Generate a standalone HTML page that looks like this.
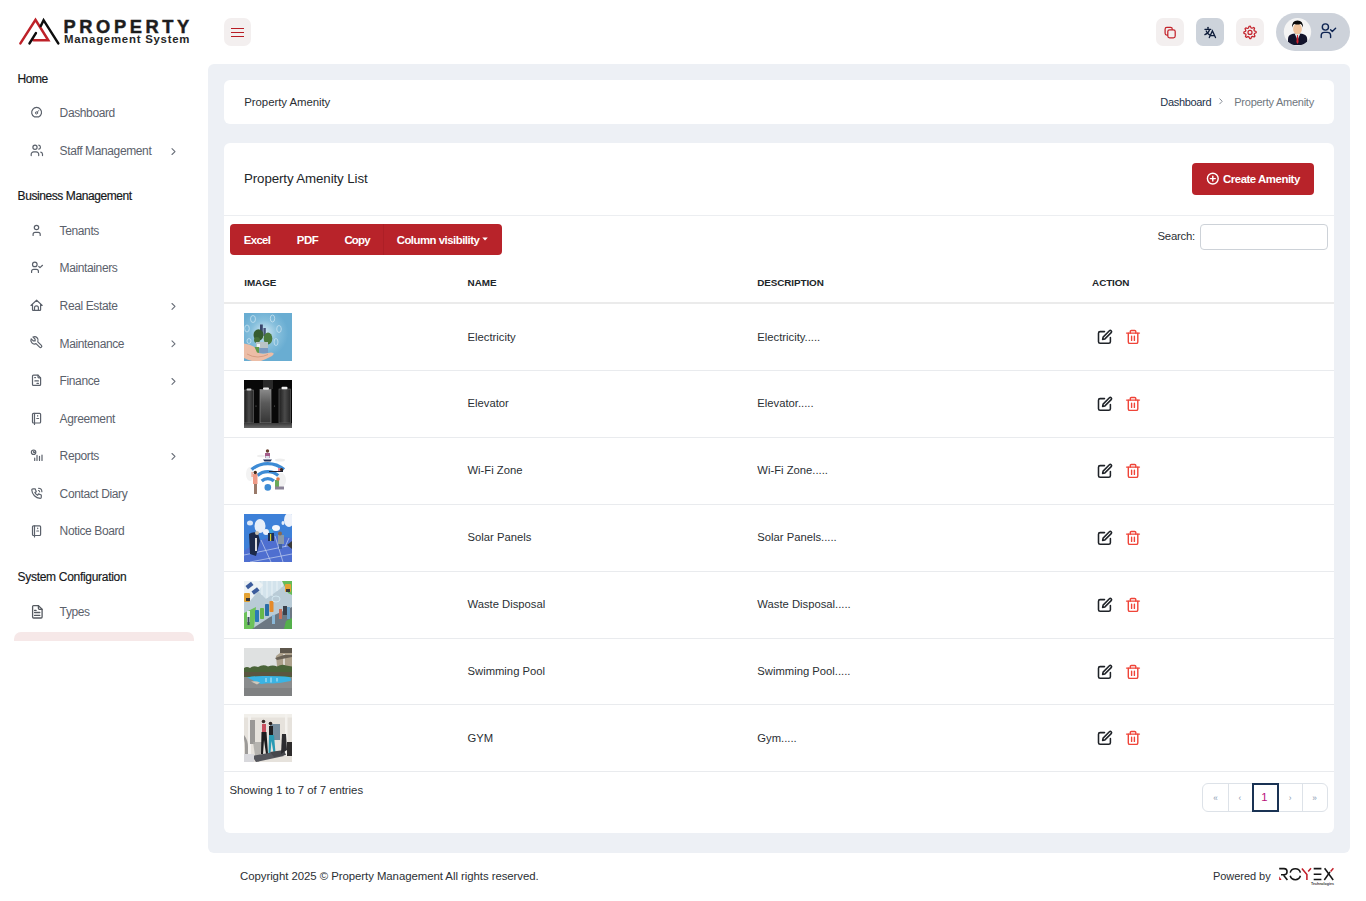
<!DOCTYPE html>
<html><head><meta charset="utf-8">
<style>
*{box-sizing:border-box;margin:0;padding:0}
html,body{width:1366px;height:901px;overflow:hidden;background:#fff;font-family:"Liberation Sans",sans-serif;color:#212529}
.abs{position:absolute}
.t{position:absolute;white-space:nowrap;line-height:1}
.hbtn{position:absolute;top:18px;width:28px;height:28px;border-radius:7px;background:#f3efef}
.sec{position:absolute;left:17.6px;font-size:12px;font-weight:400;color:#16181b;white-space:nowrap;line-height:1;letter-spacing:-0.4px;-webkit-text-stroke:0.18px #16181b}
.item{position:absolute;left:59.6px;font-size:12px;color:#5b616b;white-space:nowrap;line-height:1;letter-spacing:-0.38px}
.si{position:absolute;left:0;top:0;overflow:visible}
.panel{position:absolute;left:208px;top:64px;width:1142px;height:789px;background:#edf0f5;border-radius:6px}
.card{position:absolute;background:#fff;border-radius:6px}
.th{position:absolute;top:277.6px;font-size:9.9px;font-weight:700;color:#212529;letter-spacing:0;line-height:1;white-space:nowrap}
.row{position:absolute;left:224px;width:1110px;height:66.8333px;border-bottom:1px solid #e9ebee}
.cell{position:absolute;font-size:11.25px;color:#2b2f34;line-height:1;white-space:nowrap}
.img{position:absolute;left:20px;top:9px;width:48px;height:48px;overflow:hidden}
.img svg{filter:blur(0.3px);display:block}
.btxt{position:absolute;white-space:nowrap;line-height:1;font-size:11.4px;font-weight:700;color:#fff;letter-spacing:-0.3px}
</style></head><body>
<svg class="abs" style="left:0;top:0" width="200" height="60" viewBox="0 0 200 60">
  <polyline points="20.4,43.4 35.5,19.9 48.3,40.3 33.4,40.3" fill="none" stroke="#be2128" stroke-width="2.5" stroke-linejoin="miter" stroke-linecap="round"/>
  <line x1="29.5" y1="43.4" x2="35.9" y2="33.1" stroke="#0d0d0d" stroke-width="2.5" stroke-linecap="round"/>
  <polyline points="40.8,26 43.6,20.2 58.3,43.4" fill="none" stroke="#0d0d0d" stroke-width="2.5" stroke-linecap="round"/>
</svg>
<div class="t" style="left:63.5px;top:17.6px;font-size:18.3px;font-weight:700;letter-spacing:3.6px;color:#1d1d1d;-webkit-text-stroke:0.45px #1d1d1d">PROPERTY</div>
<div class="t" style="left:64px;top:33.6px;font-size:11.4px;font-weight:700;color:#262626;letter-spacing:0.76px">Management System</div>
<div class="hbtn" style="left:224px;width:27px"></div>
<div class="abs" style="left:231px;top:27.9px;width:13px;height:1.2px;background:#b81c24"></div>
<div class="abs" style="left:231px;top:31.9px;width:13px;height:1.2px;background:#b81c24"></div>
<div class="abs" style="left:231px;top:35.9px;width:13px;height:1.2px;background:#b81c24"></div>
<div class="hbtn" style="left:1156px"></div>
<div class="hbtn" style="left:1196px;background:#cdd3db"></div>
<div class="hbtn" style="left:1236px"></div>
<svg class="abs" style="left:1140px;top:10px" width="140" height="46" viewBox="1140 10 140 46">
  <path d="M1167.8 35.1 H1166.9 a1.8 1.8 0 0 1 -1.8 -1.8 V29.2 a1.8 1.8 0 0 1 1.8 -1.8 H1170.5 a1.8 1.8 0 0 1 1.8 1.8 V29.8" fill="none" stroke="#c4242c" stroke-width="1.25"/>
  <rect x="1167.8" y="29.8" width="7.4" height="8" rx="1.8" fill="none" stroke="#c4242c" stroke-width="1.25"/>
  <g fill="none" stroke="#0e1c3a" stroke-width="1.3" stroke-linecap="round">
    <path d="M1204.9 29.3 H1210.8"/><path d="M1208 27.3 V29.3"/>
    <path d="M1209.6 29.6 Q1208.3 33.4 1204.9 34.7"/><path d="M1206.2 31 Q1207.4 33.6 1209.6 34.9"/>
    <path d="M1209.3 37.6 L1212.4 30.9 L1215.5 37.6"/><path d="M1210.6 35.6 H1214.2"/>
  </g>
  <path d="M1249.09 26.27 L1250.30 26.21 L1251.12 27.94 L1251.97 28.24 L1253.69 27.42 L1254.59 28.24 L1253.95 30.04 L1254.33 30.85 L1256.13 31.49 L1256.19 32.70 L1254.46 33.52 L1254.16 34.37 L1254.98 36.09 L1254.16 36.99 L1252.36 36.35 L1251.55 36.73 L1250.91 38.53 L1249.70 38.59 L1248.88 36.86 L1248.03 36.56 L1246.31 37.38 L1245.41 36.56 L1246.05 34.76 L1245.67 33.95 L1243.87 33.31 L1243.81 32.10 L1245.54 31.28 L1245.84 30.43 L1245.02 28.71 L1245.84 27.81 L1247.64 28.45 L1248.45 28.07 Z" fill="none" stroke="#c4222b" stroke-width="1.2" stroke-linejoin="round"/>
  <circle cx="1250" cy="32.4" r="2" fill="none" stroke="#c4222b" stroke-width="1.2"/>
</svg>
<div class="abs" style="left:1276px;top:13px;width:74px;height:38px;border-radius:19px;background:#cdd2da"></div>
<svg class="abs" style="left:1276px;top:13px" width="74" height="38" viewBox="1276 13 74 38">
  <defs><clipPath id="av"><circle cx="1297.5" cy="31.8" r="13.7"/></clipPath></defs>
  <circle cx="1297.5" cy="31.8" r="13.7" fill="#f4f4f4"/>
  <g clip-path="url(#av)">
    <path d="M1288 45 V39 q0 -4.5 5 -5.3 L1297.5 33.5 L1302 33.7 q5 0.8 5.2 5.3 V45 Z" fill="#12132b"/>
    <path d="M1294.8 33.8 L1297.5 40 L1300.2 33.8 Z" fill="#dfeff2"/>
    <path d="M1297 35 L1298 35 L1298.6 42 L1297.5 44 L1296.4 42 Z" fill="#d21f2a"/>
    <ellipse cx="1297.5" cy="29" rx="4.4" ry="5.4" fill="#efc39c"/>
    <path d="M1292.2 27.5 q-0.6 -6.8 5.3 -7 q5.9 0.2 5.3 7 q-0.8 -3.4 -2.2 -3.6 q-3.1 1 -6.2 0 q-1.5 0.3 -2.2 3.6 Z" fill="#0b0b0b"/>
  </g>
  <g fill="none" stroke="#0e2452" stroke-width="1.4" stroke-linecap="round" stroke-linejoin="round">
    <circle cx="1325.4" cy="27" r="3.1"/>
    <path d="M1321.2 37.6 V35.6 a3.2 3.2 0 0 1 3.2 -3.2 H1327.4 a3.2 3.2 0 0 1 3.2 3.2 V37.6"/>
    <path d="M1330.6 29.8 L1332.3 31.5 L1335.6 28.3"/>
  </g>
</svg>
<div class="sec" style="top:73px;letter-spacing:-0.45px">Home</div>
<div class="sec" style="top:190px;letter-spacing:-0.42px">Business Management</div>
<div class="sec" style="top:571px;letter-spacing:-0.3px">System Configuration</div>
<div class="item" style="top:107px">Dashboard</div>
<div class="item" style="top:145px">Staff Management</div>
<div class="item" style="top:225px">Tenants</div>
<div class="item" style="top:262px">Maintainers</div>
<div class="item" style="top:300px">Real Estate</div>
<div class="item" style="top:338px">Maintenance</div>
<div class="item" style="top:375px">Finance</div>
<div class="item" style="top:413px">Agreement</div>
<div class="item" style="top:450px">Reports</div>
<div class="item" style="top:488px">Contact Diary</div>
<div class="item" style="top:525px">Notice Board</div>
<div class="item" style="top:606px">Types</div>
<svg class="abs" style="left:0;top:0" width="200" height="650" viewBox="0 0 200 650">
<g fill="none" stroke="#5b616b" stroke-width="1.2" stroke-linecap="round" stroke-linejoin="round">
  <path d="M34.3 116.8 A4.95 4.95 0 1 1 38.9 116.8 Z"/>
  <circle cx="36.5" cy="112.9" r="1.1" stroke-width="1"/><path d="M37.3 112.1 L38.6 110.6" stroke-width="1"/>
  <circle cx="35" cy="147.2" r="2.1"/>
  <path d="M31.2 155.6 V154.3 a2.4 2.4 0 0 1 2.4 -2.4 H36.3 a2.4 2.4 0 0 1 2.4 2.4 V155.6"/>
  <path d="M38.8 145.1 a2.1 2.1 0 0 1 0 4.1"/>
  <path d="M42.5 155.6 V154.3 a2.3 2.3 0 0 0 -1.7 -2.2"/>
  <circle cx="36.5" cy="227.5" r="2.2"/>
  <path d="M33.1 235.5 V234.3 a2 2 0 0 1 2 -2 H38.2 a2 2 0 0 1 2 2 V235.5"/>
  <circle cx="34.8" cy="264.4" r="2.3"/>
  <path d="M31.6 272.5 V271.3 a2 2 0 0 1 2 -2 H36.4 a2 2 0 0 1 2 2 V272.5"/>
  <path d="M38.8 266.5 L40 267.6 L42.5 265.3"/>
  <path d="M32.5 305.4 H31 L36.6 300.2 L42.2 305.4 H40.7"/>
  <path d="M32.5 304.3 V309.7 a0.7 0.7 0 0 0 0.7 0.7 H39.9 a0.7 0.7 0 0 0 0.7 -0.7 V304.3"/>
  <path d="M34.5 310.4 V307.8 a1.95 1.95 0 0 1 3.9 0 V310.4"/>
  <g transform="translate(29.1 334.9) scale(0.6)" stroke-width="2"><path d="M7 10h3v-3l-3.5 -3.5a6 6 0 0 1 8 8l6 6a2 2 0 0 1 -3 3l-6 -6a6 6 0 0 1 -8 -8l3.5 3.5"/></g>
  <path d="M32.5 376.1 a1 1 0 0 1 1 -1 H38 L40.6 377.8 V384.4 a1 1 0 0 1 -1 1 H33.5 a1 1 0 0 1 -1 -1 Z"/>
  <path d="M38 375.2 V377 a0.8 0.8 0 0 0 0.8 0.8 H40.5"/>
  <path d="M34.7 377.6 H35.5 M34.9 380.9 H38.4 M37 383.4 H38.4"/>
  <rect x="32.5" y="413.3" width="8.1" height="9.7" rx="1"/>
  <path d="M34.5 413.3 V424.5 M37.7 415.6 V416.1 M36.8 418.5 H38.6"/>
  <circle cx="33.6" cy="452.2" r="2.2"/><path d="M33.7 451.1 V452.4 H34.7"/>
  <path d="M34.7 458.2 V460.5 M37 455.4 V460.5 M39.5 456.3 V460.5 M42 455.1 V460.5"/>
  <g transform="translate(30.1 486.6) scale(0.56)" stroke-width="2.1"><path d="M5 4h4l2 5l-2.5 1.5a11 11 0 0 0 5 5l1.5 -2.5l5 2v4a2 2 0 0 1 -2 2a16 16 0 0 1 -15 -15a2 2 0 0 1 2 -2"/><path d="M15 7a2 2 0 0 1 2 2"/><path d="M15 3a6 6 0 0 1 6 6"/></g>
  <rect x="32.5" y="525.8" width="8.1" height="9.7" rx="1"/>
  <path d="M34.5 525.8 V537 M37.7 528.1 V528.6 M36.8 531 H38.6"/>
  <g stroke="#555a60" stroke-width="1.3">
  <path d="M32.6 606.6 a1 1 0 0 1 1 -1 H38.4 L42.1 609.3 V617 a1 1 0 0 1 -1 1 H33.6 a1 1 0 0 1 -1 -1 Z"/>
  <path d="M38.4 605.7 V608.3 a1 1 0 0 0 1 1 H42"/>
  <path d="M34.6 610.4 H36.1 M34.6 612.5 H39.8 M34.6 615.4 H39.8"/>
  </g>
</g>
<g fill="none" stroke="#6a707a" stroke-width="1.1" stroke-linecap="round" stroke-linejoin="round">

  <path d="M172 148.7 L175 151.6 L172 154.5"/>
  <path d="M172 303.5 L175 306.4 L172 309.3"/>
  <path d="M172 340.9 L175 343.8 L172 346.7"/>
  <path d="M172 378.5 L175 381.4 L172 384.3"/>
  <path d="M172 453.5 L175 456.4 L172 459.3"/>
</g></svg>
<div class="abs" style="left:14px;top:632px;width:180px;height:9px;background:#f6e8e8;border-radius:7px 7px 0 0"></div>
<div class="panel"></div>
<div class="card" style="left:224px;top:80px;width:1110px;height:44px"></div>
<div class="t" style="left:244.3px;top:97.4px;font-size:11.4px;color:#2a2e33;letter-spacing:-0.05px">Property Amenity</div>
<div class="t" style="left:1160.3px;top:97.4px;font-size:11px;color:#24324a;letter-spacing:-0.32px">Dashboard</div>
<svg class="abs" style="left:1216px;top:96px" width="10" height="12" viewBox="0 0 10 12"><path d="M3.5 2.5 L6.2 5.3 L3.5 8.1" fill="none" stroke="#8a9099" stroke-width="1"/></svg>
<div class="t" style="left:1234.3px;top:97.4px;font-size:11px;color:#707780;letter-spacing:-0.26px">Property Amenity</div>
<div class="card" style="left:224px;top:143px;width:1110px;height:690px"></div>
<div class="t" style="left:244px;top:171.5px;font-size:13.3px;color:#212529;letter-spacing:-0.1px">Property Amenity List</div>
<div class="abs" style="left:1192px;top:163px;width:122px;height:32px;background:#b8232a;border-radius:4px"></div>
<svg class="abs" style="left:1200px;top:170px" width="20" height="18" viewBox="1200 170 20 18"><g fill="none" stroke="#fff" stroke-width="1.4" stroke-linecap="round"><circle cx="1212.8" cy="178.6" r="5.4"/><path d="M1212.8 176.1 V181.1 M1210.3 178.6 H1215.3"/></g></svg>
<div class="btxt" style="left:1223px;top:174.2px;letter-spacing:-0.45px">Create Amenity</div>
<div class="abs" style="left:224px;top:215px;width:1110px;height:1px;background:#eceef1"></div>
<div class="abs" style="left:230px;top:224px;width:272px;height:31px;background:#b8232a;border-radius:4px"></div>
<div class="abs" style="left:383px;top:224px;width:1px;height:31px;background:#ad1f26"></div>
<div class="btxt" style="left:243.7px;top:235.2px;letter-spacing:-0.62px">Excel</div>
<div class="btxt" style="left:296.8px;top:235.2px;letter-spacing:-0.4px">PDF</div>
<div class="btxt" style="left:344.4px;top:235.2px;letter-spacing:-0.75px">Copy</div>
<div class="btxt" style="left:396.7px;top:235.2px;letter-spacing:-0.5px">Column visibility</div>
<svg class="abs" style="left:480px;top:234px" width="10" height="8" viewBox="480 234 10 8"><path d="M482.3 237.6 H487.8 L485.05 240.5 Z" fill="#fff"/></svg>
<div class="t" style="left:1157.5px;top:231px;font-size:11.4px;color:#2b2f34;letter-spacing:-0.25px">Search:</div>
<div class="abs" style="left:1200px;top:224px;width:128px;height:26px;border:1px solid #cdd2d8;border-radius:4px;background:#fff"></div>
<div class="th" style="left:244.2px;letter-spacing:-0.05px">IMAGE</div>
<div class="th" style="left:467.6px;letter-spacing:0px">NAME</div>
<div class="th" style="left:757.3px;letter-spacing:-0.1px">DESCRIPTION</div>
<div class="th" style="left:1092.1px;letter-spacing:-0.1px">ACTION</div>
<div class="abs" style="left:224px;top:302px;width:1110px;height:2px;background:#ebebeb"></div>
<div class="row" style="top:304px;height:67px"><div class="img" style="top:9.0px"><svg width="48" height="48" viewBox="0 0 48 48">
<defs><radialGradient id="g0" cx="0.42" cy="0.42" r="0.5"><stop offset="0" stop-color="#d6ebf5"/><stop offset="0.55" stop-color="#86bfdc"/><stop offset="1" stop-color="#69add2"/></radialGradient></defs>
<rect width="48" height="48" fill="#69add2"/><rect width="48" height="48" fill="url(#g0)"/>
<g fill="none" stroke="#eef6fb" stroke-width="0.7" opacity="0.75"><ellipse cx="9" cy="6" rx="2.5" ry="3.5"/><ellipse cx="28.5" cy="5.5" rx="2.2" ry="3.5"/><ellipse cx="35" cy="16" rx="2.3" ry="3.5"/><ellipse cx="3" cy="15.5" rx="2.3" ry="3.5"/><ellipse cx="32" cy="29" rx="2" ry="3.5"/><ellipse cx="5" cy="28" rx="2" ry="2.5"/></g>
<rect x="16" y="11.5" width="2.8" height="10" fill="#38456a"/><rect x="19.4" y="15" width="2.4" height="8" fill="#46537a"/>
<ellipse cx="14.5" cy="22" rx="5" ry="5.8" fill="#355c30"/><ellipse cx="24" cy="25.5" rx="4.3" ry="6" fill="#4a7a3c"/><circle cx="13" cy="27" r="3" fill="#45703a"/>
<rect x="12" y="29" width="12" height="11" fill="#b9c4c6"/><rect x="12" y="35" width="12" height="5" fill="#7a9ac0"/><rect x="13" y="31" width="3" height="3" fill="#eef2f4"/><rect x="10" y="34" width="5" height="6" fill="#5e9a48"/>
<path d="M0 30.5 q6 0.5 10.5 3.5 l2.5 5.5 q5 2 11 0.5 q4 -1.2 5.5 0.3 q0.6 1.2 -1.5 2.6 q-6 3.2 -11 5 q-4 1 -9 0.1 q-4 -1 -8 -3 Z" fill="#ecbda6"/>
<path d="M3 41 q5 3 11 3 q6 -0.5 10 -2.5" fill="none" stroke="#cf957a" stroke-width="0.8"/>
</svg></div><div class="cell" style="left:243.5px;top:28.3px">Electricity</div><div class="cell" style="left:533.3px;top:28.3px">Electricity.....</div><div class="abs" style="left:0;top:0.0px"><svg class="abs" style="left:868px;top:20px" width="54" height="26" viewBox="1092 324 54 26">
<g fill="none" stroke="#1f2328" stroke-width="1.55" stroke-linecap="round" stroke-linejoin="round">
<path d="M1104.5 331.6 H1100.1 a1.6 1.6 0 0 0 -1.6 1.6 V341.7 a1.6 1.6 0 0 0 1.6 1.6 H1108.8 a1.6 1.6 0 0 0 1.6 -1.6 V337.6"/>
<path d="M1102.6 339.4 L1103.1 337.1 L1109.4 330.8 a1.25 1.25 0 0 1 1.8 1.8 L1104.9 338.9 Z"/>
</g>
<g fill="none" stroke="#ef4438" stroke-width="1.4" stroke-linecap="round" stroke-linejoin="round">
<path d="M1126.6 333.1 H1139.4"/>
<path d="M1130.3 333 V331.6 a1.1 1.1 0 0 1 1.1 -1.1 H1134.7 a1.1 1.1 0 0 1 1.1 1.1 V333"/>
<path d="M1128.3 333.2 V341.9 a1.5 1.5 0 0 0 1.5 1.5 H1136.3 a1.5 1.5 0 0 0 1.5 -1.5 V333.2"/>
<path d="M1131.6 336.2 V340.4 M1134.4 336.2 V340.4"/>
</g></svg></div></div>
<div class="row" style="top:371px;height:67px"><div class="img" style="top:9.0px"><svg width="48" height="48" viewBox="0 0 48 48">
<defs><linearGradient id="g1" x1="0" y1="0" x2="0" y2="1"><stop offset="0" stop-color="#8a8a8a"/><stop offset="0.4" stop-color="#5a5a5a"/><stop offset="1" stop-color="#353535"/></linearGradient>
<linearGradient id="g1b" x1="0" y1="0" x2="1" y2="0"><stop offset="0" stop-color="#1e1e1e"/><stop offset="0.5" stop-color="#4a4a4a"/><stop offset="1" stop-color="#262626"/></linearGradient>
<linearGradient id="g1c" x1="0" y1="0" x2="0" y2="1"><stop offset="0" stop-color="#3a3a3a"/><stop offset="1" stop-color="#6a6a6a"/></linearGradient></defs>
<rect width="48" height="48" fill="#080808"/>
<rect x="19" y="0" width="10" height="9" fill="#2a2a2a"/>
<rect x="0.5" y="10" width="9" height="33" fill="url(#g1b)"/><rect x="0.5" y="10" width="9" height="33" fill="none" stroke="#6e6e6e" stroke-width="0.6"/>
<rect x="16" y="9.5" width="11" height="33.5" fill="url(#g1)"/><rect x="16" y="9.5" width="11" height="33.5" fill="none" stroke="#8a8a8a" stroke-width="0.7"/>
<rect x="35" y="9" width="11.5" height="34" fill="url(#g1b)"/><rect x="35" y="9" width="11.5" height="34" fill="none" stroke="#6a6a6a" stroke-width="0.6"/>
<rect x="2.5" y="8.5" width="5" height="2" rx="1" fill="#cfcfcf"/><rect x="19" y="7.5" width="6" height="2.2" rx="1" fill="#e6e6e6"/><rect x="37.5" y="6.8" width="6" height="2.4" rx="1" fill="#eeeeee"/>
<rect y="43" width="48" height="5" fill="url(#g1c)"/>
<circle cx="12" cy="26" r="0.6" fill="#777"/><circle cx="30.5" cy="26" r="0.6" fill="#666"/>
</svg></div><div class="cell" style="left:243.5px;top:27.3px">Elevator</div><div class="cell" style="left:533.3px;top:27.3px">Elevator.....</div><div class="abs" style="left:0;top:0.0px"><svg class="abs" style="left:868px;top:20px" width="54" height="26" viewBox="1092 324 54 26">
<g fill="none" stroke="#1f2328" stroke-width="1.55" stroke-linecap="round" stroke-linejoin="round">
<path d="M1104.5 331.6 H1100.1 a1.6 1.6 0 0 0 -1.6 1.6 V341.7 a1.6 1.6 0 0 0 1.6 1.6 H1108.8 a1.6 1.6 0 0 0 1.6 -1.6 V337.6"/>
<path d="M1102.6 339.4 L1103.1 337.1 L1109.4 330.8 a1.25 1.25 0 0 1 1.8 1.8 L1104.9 338.9 Z"/>
</g>
<g fill="none" stroke="#ef4438" stroke-width="1.4" stroke-linecap="round" stroke-linejoin="round">
<path d="M1126.6 333.1 H1139.4"/>
<path d="M1130.3 333 V331.6 a1.1 1.1 0 0 1 1.1 -1.1 H1134.7 a1.1 1.1 0 0 1 1.1 1.1 V333"/>
<path d="M1128.3 333.2 V341.9 a1.5 1.5 0 0 0 1.5 1.5 H1136.3 a1.5 1.5 0 0 0 1.5 -1.5 V333.2"/>
<path d="M1131.6 336.2 V340.4 M1134.4 336.2 V340.4"/>
</g></svg></div></div>
<div class="row" style="top:438px;height:67px"><div class="img" style="top:9.0px"><svg width="48" height="48" viewBox="0 0 48 48">
<rect width="48" height="48" fill="#fff"/>
<g transform="translate(-4 -4)">
<ellipse cx="41" cy="37" rx="5" ry="7" fill="#f1f1f1"/><ellipse cx="10" cy="31" rx="4" ry="7" fill="#f3f3f3"/>
<ellipse cx="21" cy="13" rx="4" ry="1.2" fill="#efefef"/><ellipse cx="40" cy="17" rx="5" ry="1.5" fill="#eeeeee"/>
</g>
<g fill="none" stroke="#3d8bd5" stroke-width="3.3">
<path d="M7.6 22.6 A24.7 24.7 0 0 1 40 22.6"/>
<path d="M13.4 28.4 A16 16 0 0 1 34.2 28.4"/>
<path d="M17.7 34 A9 9 0 0 1 29.9 34"/>
</g>
<circle cx="23.8" cy="40.4" r="3.3" fill="#3d8bd5"/>
<g transform="translate(-4 -4)">
<rect x="25" y="10" width="5" height="5" fill="#a45c8a"/><circle cx="27.5" cy="8" r="1.7" fill="#6a4030"/><path d="M23 16.5 h9 l-1.5 2 h-6 Z" fill="#24335c"/><rect x="25.5" y="13" width="4" height="2.5" fill="#dde3ec"/>
<rect x="13" y="31" width="4.5" height="10" fill="#ef9a86"/><circle cx="15.3" cy="29.5" r="1.7" fill="#4a2a1a"/><rect x="14" y="41" width="3" height="10" fill="#9a7a6a"/><rect x="11.5" y="29" width="1.2" height="5" fill="#ef9a86"/>
<path d="M35 37 h4 v7 h-4 Z" fill="#6aaa5a"/><circle cx="38" cy="36" r="1.8" fill="#e27a4a"/><rect x="35" y="43.5" width="9" height="3" fill="#8a8296"/>
<path d="M29 28 h9 l2 -2 h3 v3 h-14 Z" fill="#1e2438"/><rect x="38" y="25" width="3.5" height="3" fill="#e8849a"/><circle cx="41.5" cy="26.5" r="1.6" fill="#3a2a22"/>
</g>
</svg></div><div class="cell" style="left:243.5px;top:27.3px">Wi-Fi Zone</div><div class="cell" style="left:533.3px;top:27.3px">Wi-Fi Zone.....</div><div class="abs" style="left:0;top:0.0px"><svg class="abs" style="left:868px;top:20px" width="54" height="26" viewBox="1092 324 54 26">
<g fill="none" stroke="#1f2328" stroke-width="1.55" stroke-linecap="round" stroke-linejoin="round">
<path d="M1104.5 331.6 H1100.1 a1.6 1.6 0 0 0 -1.6 1.6 V341.7 a1.6 1.6 0 0 0 1.6 1.6 H1108.8 a1.6 1.6 0 0 0 1.6 -1.6 V337.6"/>
<path d="M1102.6 339.4 L1103.1 337.1 L1109.4 330.8 a1.25 1.25 0 0 1 1.8 1.8 L1104.9 338.9 Z"/>
</g>
<g fill="none" stroke="#ef4438" stroke-width="1.4" stroke-linecap="round" stroke-linejoin="round">
<path d="M1126.6 333.1 H1139.4"/>
<path d="M1130.3 333 V331.6 a1.1 1.1 0 0 1 1.1 -1.1 H1134.7 a1.1 1.1 0 0 1 1.1 1.1 V333"/>
<path d="M1128.3 333.2 V341.9 a1.5 1.5 0 0 0 1.5 1.5 H1136.3 a1.5 1.5 0 0 0 1.5 -1.5 V333.2"/>
<path d="M1131.6 336.2 V340.4 M1134.4 336.2 V340.4"/>
</g></svg></div></div>
<div class="row" style="top:505px;height:67px"><div class="img" style="top:9.0px"><svg width="48" height="48" viewBox="0 0 48 48">
<rect width="48" height="48" fill="#3d80d8"/>
<ellipse cx="16" cy="12" rx="5.5" ry="7" fill="#f0f4fb" opacity="0.95"/><ellipse cx="22" cy="18" rx="3" ry="3" fill="#eef3fb"/><ellipse cx="32" cy="14" rx="4" ry="3" fill="#f4f7fc"/><ellipse cx="45" cy="6" rx="5" ry="7" fill="#eef2fa"/><ellipse cx="6" cy="9" rx="3" ry="2.5" fill="#dbe6f6"/><ellipse cx="39" cy="9" rx="1.5" ry="2" fill="#e6eefa"/>
<path d="M14 27 L31 22 L48 24 L48 48 L0 48 L0 37 Z" fill="#4f6fd0"/>
<g stroke="#c7d4ef" stroke-width="0.7" fill="none"><path d="M0 41 L48 31"/><path d="M6 48 L48 40"/><path d="M17 26 L27 48"/><path d="M31 22 L39 48"/><path d="M45 24 L41 33"/></g>
<path d="M5 20 q4 -3 9 -1 l2 8 l-4 15 l-6 -2 Z" fill="#1c2a4a"/><circle cx="13" cy="19" r="2" fill="#c9c2b0"/><rect x="11" y="24" width="2" height="13" fill="#dcdcdc"/>
<rect x="24" y="19" width="6" height="8" fill="#1e3054"/><circle cx="27" cy="17" r="2.2" fill="#3aa0de"/><rect x="26" y="20" width="1.2" height="7" fill="#d8d030"/>
<rect x="34" y="21" width="6" height="9" fill="#8a9aa8"/><circle cx="36" cy="19.5" r="2" fill="#8a6a50"/><rect x="35" y="30" width="3" height="5" fill="#4060a0"/>
<path d="M43 31 L48 27 L48 35 Z" fill="#3a3a3a"/>
</svg></div><div class="cell" style="left:243.5px;top:27.3px">Solar Panels</div><div class="cell" style="left:533.3px;top:27.3px">Solar Panels.....</div><div class="abs" style="left:0;top:0.0px"><svg class="abs" style="left:868px;top:20px" width="54" height="26" viewBox="1092 324 54 26">
<g fill="none" stroke="#1f2328" stroke-width="1.55" stroke-linecap="round" stroke-linejoin="round">
<path d="M1104.5 331.6 H1100.1 a1.6 1.6 0 0 0 -1.6 1.6 V341.7 a1.6 1.6 0 0 0 1.6 1.6 H1108.8 a1.6 1.6 0 0 0 1.6 -1.6 V337.6"/>
<path d="M1102.6 339.4 L1103.1 337.1 L1109.4 330.8 a1.25 1.25 0 0 1 1.8 1.8 L1104.9 338.9 Z"/>
</g>
<g fill="none" stroke="#ef4438" stroke-width="1.4" stroke-linecap="round" stroke-linejoin="round">
<path d="M1126.6 333.1 H1139.4"/>
<path d="M1130.3 333 V331.6 a1.1 1.1 0 0 1 1.1 -1.1 H1134.7 a1.1 1.1 0 0 1 1.1 1.1 V333"/>
<path d="M1128.3 333.2 V341.9 a1.5 1.5 0 0 0 1.5 1.5 H1136.3 a1.5 1.5 0 0 0 1.5 -1.5 V333.2"/>
<path d="M1131.6 336.2 V340.4 M1134.4 336.2 V340.4"/>
</g></svg></div></div>
<div class="row" style="top:572px;height:67px"><div class="img" style="top:9.0px"><svg width="48" height="48" viewBox="0 0 48 48">
<rect width="48" height="48" fill="#b9cbd6"/>
<path d="M14 0 H44 L36 8 L22 18 L14 10 Z" fill="#d3e3ec"/>
<path d="M18 0 v14 M23 0 v17 M28 0 v15 M33 0 v10 M38 0 v6" stroke="#e9f2f6" stroke-width="1"/>
<path d="M0 0 H15 L19 4 L6 20 L0 17 Z" fill="#eef3f5"/>
<rect x="2" y="2.5" width="7" height="4" fill="#3c5c9c" transform="rotate(-38 5.5 4.5)"/><rect x="8" y="8" width="7" height="4" fill="#3c5c9c" transform="rotate(-38 11.5 10)"/>
<path d="M38 0 H48 V14 L44 12 Z" fill="#66bb58"/>
<rect x="41" y="3" width="6" height="8" rx="1" fill="#e3a233"/><rect x="42" y="8" width="4" height="3" fill="#3a3a3a"/>
<rect x="0" y="12" width="6" height="9" rx="1" fill="#e3a233"/><rect x="2" y="17" width="4" height="3" fill="#3a3a3a"/>
<path d="M0 32 L12 26 L10 48 H0 Z" fill="#6cc25a"/>
<path d="M8 48 L26 36 L48 26 V48 Z" fill="#6c7883"/>
<path d="M42 40 L48 37 V48 H40 Z" fill="#54b04c"/>
<rect x="11" y="29" width="4" height="12" rx="0.8" fill="#2a78b8"/><rect x="16" y="27" width="4" height="11" rx="0.8" fill="#68b84a"/><rect x="21" y="23" width="4" height="12" rx="0.8" fill="#2a6ea8"/><rect x="25.5" y="20" width="4" height="11" rx="0.8" fill="#e58a2a"/>
<ellipse cx="32" cy="18" rx="4" ry="3" fill="none" stroke="#d8eef6" stroke-width="0.8"/>
<rect x="35" y="28" width="3" height="10" fill="#c8705a"/><rect x="39" y="25" width="4" height="9" fill="#3a3f4a"/><rect x="43" y="26" width="3" height="12" fill="#6aa0c8"/><rect x="28" y="34" width="3" height="9" fill="#8ab8d8"/><rect x="3" y="30" width="3" height="11" fill="#e8f0f2"/><rect x="3.5" y="36" width="2" height="8" fill="#3a4a5a"/>
</svg></div><div class="cell" style="left:243.5px;top:27.3px">Waste Disposal</div><div class="cell" style="left:533.3px;top:27.3px">Waste Disposal.....</div><div class="abs" style="left:0;top:0.0px"><svg class="abs" style="left:868px;top:20px" width="54" height="26" viewBox="1092 324 54 26">
<g fill="none" stroke="#1f2328" stroke-width="1.55" stroke-linecap="round" stroke-linejoin="round">
<path d="M1104.5 331.6 H1100.1 a1.6 1.6 0 0 0 -1.6 1.6 V341.7 a1.6 1.6 0 0 0 1.6 1.6 H1108.8 a1.6 1.6 0 0 0 1.6 -1.6 V337.6"/>
<path d="M1102.6 339.4 L1103.1 337.1 L1109.4 330.8 a1.25 1.25 0 0 1 1.8 1.8 L1104.9 338.9 Z"/>
</g>
<g fill="none" stroke="#ef4438" stroke-width="1.4" stroke-linecap="round" stroke-linejoin="round">
<path d="M1126.6 333.1 H1139.4"/>
<path d="M1130.3 333 V331.6 a1.1 1.1 0 0 1 1.1 -1.1 H1134.7 a1.1 1.1 0 0 1 1.1 1.1 V333"/>
<path d="M1128.3 333.2 V341.9 a1.5 1.5 0 0 0 1.5 1.5 H1136.3 a1.5 1.5 0 0 0 1.5 -1.5 V333.2"/>
<path d="M1131.6 336.2 V340.4 M1134.4 336.2 V340.4"/>
</g></svg></div></div>
<div class="row" style="top:639px;height:66px"><div class="img" style="top:8.5px"><svg width="48" height="48" viewBox="0 0 48 48">
<rect width="48" height="48" fill="#dfe1e1"/>
<path d="M32 8 L36 5 V0 H48 V28 H34 Z" fill="#ada18c"/><rect x="36" y="0" width="12" height="5" fill="#5e574c"/><rect x="39" y="6" width="2" height="20" fill="#dcd8d0"/><path d="M31 10 L40 7 L48 7 V9 L33 12 Z" fill="#6a6256"/>
<path d="M0 20 q3 -2 6 0 q3 -3 8 -1 q5 -3 10 -0.5 q5 -2 9 0 q5 -3 9 -1 l6 1 V29 H0 Z" fill="#4a6439"/>
<path d="M0 24 h48 v4 h-48 Z" fill="#5b5540"/>
<path d="M0 29 L48 29 L48 48 L0 48 Z" fill="#8a8c8d"/>
<path d="M3 29.5 q8 -2 20 -1.5 q14 0 22 1 q3 1.5 1.5 4 q-10 2 -18 2.5 q-6 -0.5 -11 0.5 q-6 -1 -9 -4 Z" fill="#3ab4e4"/>
<path d="M22 30 v4 M27 29.5 v5 M33 30 v3.5" stroke="#d8f2fa" stroke-width="0.9"/>
<path d="M7 33.5 q5 -1 9 1 l-3 2 Z" fill="#cfc8bb"/>
<rect x="0" y="40" width="48" height="8" fill="#7f8182"/>
</svg></div><div class="cell" style="left:243.5px;top:27.3px">Swimming Pool</div><div class="cell" style="left:533.3px;top:27.3px">Swimming Pool.....</div><div class="abs" style="left:0;top:-0.5px"><svg class="abs" style="left:868px;top:20px" width="54" height="26" viewBox="1092 324 54 26">
<g fill="none" stroke="#1f2328" stroke-width="1.55" stroke-linecap="round" stroke-linejoin="round">
<path d="M1104.5 331.6 H1100.1 a1.6 1.6 0 0 0 -1.6 1.6 V341.7 a1.6 1.6 0 0 0 1.6 1.6 H1108.8 a1.6 1.6 0 0 0 1.6 -1.6 V337.6"/>
<path d="M1102.6 339.4 L1103.1 337.1 L1109.4 330.8 a1.25 1.25 0 0 1 1.8 1.8 L1104.9 338.9 Z"/>
</g>
<g fill="none" stroke="#ef4438" stroke-width="1.4" stroke-linecap="round" stroke-linejoin="round">
<path d="M1126.6 333.1 H1139.4"/>
<path d="M1130.3 333 V331.6 a1.1 1.1 0 0 1 1.1 -1.1 H1134.7 a1.1 1.1 0 0 1 1.1 1.1 V333"/>
<path d="M1128.3 333.2 V341.9 a1.5 1.5 0 0 0 1.5 1.5 H1136.3 a1.5 1.5 0 0 0 1.5 -1.5 V333.2"/>
<path d="M1131.6 336.2 V340.4 M1134.4 336.2 V340.4"/>
</g></svg></div></div>
<div class="row" style="top:705px;height:67px"><div class="img" style="top:9.0px"><svg width="48" height="48" viewBox="0 0 48 48">
<rect width="48" height="48" fill="#e6e2dc"/>
<rect x="0" y="0" width="48" height="3.5" fill="#f1efea"/><rect x="4" y="2" width="3" height="46" fill="#f3f1ee"/>
<rect x="41" y="0" width="2.5" height="42" fill="#f4f2ee"/>
<rect x="26" y="10" width="10" height="16" fill="#50708a" opacity="0.75"/>
<rect x="6" y="6" width="5" height="24" fill="#9a9896"/>
<path d="M0 21 q4 5 4 12 v15 h-3 v-14 q0 -6 -1 -9 Z" fill="#9c9a98"/>
<path d="M9 28 h10 l-4 20 h-3 Z" fill="#a9a7a4" opacity="0.8"/>
<circle cx="19.5" cy="7.5" r="1.8" fill="#3a2e2a"/><rect x="18" y="10" width="4" height="8" fill="#c8505e"/><path d="M17.5 18 h5 l1.5 22 h-2 l-2 -14 l-1 14 h-2 Z" fill="#1c1c1e"/>
<circle cx="26.5" cy="9.5" r="1.8" fill="#2a2220"/><rect x="25" y="12" width="4" height="9" fill="#1f1f22"/><path d="M25 21 h5 l1.5 18 h-2 l-2 -12 l-1 12 h-2 Z" fill="#2a9ab3"/>
<path d="M8 42 L36 37 L40 42 L12 48 Z" fill="#55565c"/><path d="M26 38 L40 36 L42 41 L30 43 Z" fill="#46474c"/>
<path d="M38 20 l4 0 l1 16 l-6 4 Z" fill="#2c2c30"/><rect x="43" y="28" width="5" height="14" fill="#2e2c2c"/>
<rect x="0" y="40" width="10" height="8" fill="#d8d8dc"/>
</svg></div><div class="cell" style="left:243.5px;top:28.3px">GYM</div><div class="cell" style="left:533.3px;top:28.3px">Gym.....</div><div class="abs" style="left:0;top:0.0px"><svg class="abs" style="left:868px;top:20px" width="54" height="26" viewBox="1092 324 54 26">
<g fill="none" stroke="#1f2328" stroke-width="1.55" stroke-linecap="round" stroke-linejoin="round">
<path d="M1104.5 331.6 H1100.1 a1.6 1.6 0 0 0 -1.6 1.6 V341.7 a1.6 1.6 0 0 0 1.6 1.6 H1108.8 a1.6 1.6 0 0 0 1.6 -1.6 V337.6"/>
<path d="M1102.6 339.4 L1103.1 337.1 L1109.4 330.8 a1.25 1.25 0 0 1 1.8 1.8 L1104.9 338.9 Z"/>
</g>
<g fill="none" stroke="#ef4438" stroke-width="1.4" stroke-linecap="round" stroke-linejoin="round">
<path d="M1126.6 333.1 H1139.4"/>
<path d="M1130.3 333 V331.6 a1.1 1.1 0 0 1 1.1 -1.1 H1134.7 a1.1 1.1 0 0 1 1.1 1.1 V333"/>
<path d="M1128.3 333.2 V341.9 a1.5 1.5 0 0 0 1.5 1.5 H1136.3 a1.5 1.5 0 0 0 1.5 -1.5 V333.2"/>
<path d="M1131.6 336.2 V340.4 M1134.4 336.2 V340.4"/>
</g></svg></div></div>
<div class="t" style="left:229.5px;top:784.6px;font-size:11.4px;color:#2b2f34;letter-spacing:-0.05px">Showing 1 to 7 of 7 entries</div>
<div class="abs" style="left:1202px;top:783px;width:126px;height:28.5px;border:1px solid #dde2e8;border-radius:6px"></div>
<div class="abs" style="left:1228px;top:783px;width:1px;height:28.5px;background:#dde2e8"></div>
<div class="abs" style="left:1302px;top:783px;width:1px;height:28.5px;background:#dde2e8"></div>
<div class="abs" style="left:1252px;top:783px;width:27px;height:28.5px;border:2px solid #1a3354;background:#fff"></div>
<div class="t" style="left:1261.3px;top:792px;font-size:11.3px;color:#b8137a">1</div>
<div class="t" style="left:1213.3px;top:795px;font-size:8.2px;color:#8a9ab2">«</div>
<div class="t" style="left:1238.6px;top:795px;font-size:8.2px;color:#8a9ab2">‹</div>
<div class="t" style="left:1288.8px;top:795px;font-size:8.2px;color:#8a9ab2">›</div>
<div class="t" style="left:1312.3px;top:795px;font-size:8.2px;color:#8a9ab2">»</div>
<div class="t" style="left:240px;top:870.6px;font-size:11.4px;color:#2b2f34;letter-spacing:-0.05px">Copyright 2025 © Property Management All rights reserved.</div>
<div class="t" style="left:1213px;top:870.6px;font-size:11px;color:#2b2f34;letter-spacing:-0.05px">Powered by</div>
<svg class="abs" style="left:1276px;top:864px" width="62" height="26" viewBox="1276 864 62 26">
<g fill="none" stroke-width="1.55" stroke-linecap="butt">
<path d="M1279.2 868.6 H1284 a3 3 0 0 1 0 6.1 H1281" stroke="#161616"/>
<path d="M1283.6 875.2 L1287.4 880" stroke="#161616"/>
<path d="M1290.2 872.6 A5.3 5.3 0 0 1 1300.4 872.6 M1290.2 875.8 A5.3 5.3 0 0 0 1300.4 875.8" stroke="#161616"/>
<path d="M1301.9 868.4 L1306.9 874.6 V880" stroke="#c21e28"/>
<path d="M1308.2 871.4 L1311 868.3" stroke="#c21e28"/>
<path d="M1313.7 868.6 H1321.4 M1313.7 874.2 H1321.4 M1313.7 879.4 H1321.4" stroke="#161616"/>
<path d="M1324.6 868.3 L1333.2 880" stroke="#161616"/>
<path d="M1324.3 880 L1330 871.9" stroke="#161616"/>
<path d="M1330.6 871.4 L1333.4 868.3" stroke="#c21e28"/>
</g>
<path d="M1279.2 876.2 L1281.6 880 H1279.2 Z" fill="#c21e28"/>
<text x="1334" y="885.3" text-anchor="end" font-family="Liberation Sans" font-size="3.7" font-weight="700" fill="#3a3a3a" textLength="23" lengthAdjust="spacingAndGlyphs">Technologies</text>
</svg>
</body></html>
